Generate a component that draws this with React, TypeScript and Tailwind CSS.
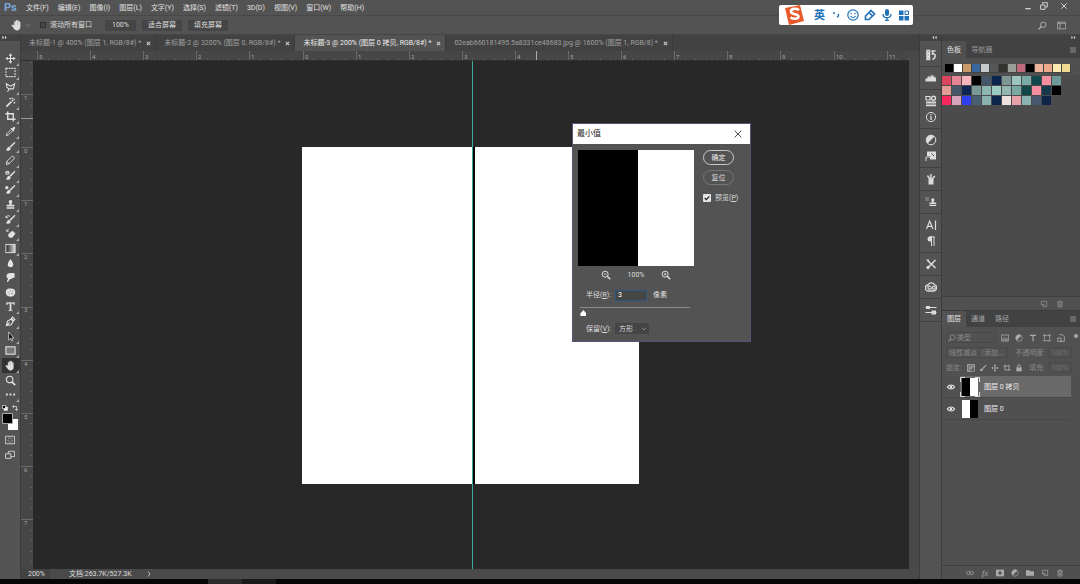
import React, { useState } from 'react';

type IconProps = { children: React.ReactNode; className?: string };

// All glyphs share a 12 x 12 grid
const Glyph: React.FC<IconProps> = ({ children, className = 'size-3' }) => (
  <svg viewBox="0 0 12 12" className={className} fill="none" stroke="currentColor" strokeWidth="1" aria-hidden="true">
    {children}
  </svg>
);

const solid = { fill: 'currentColor', stroke: 'none' };

const brush = (
  <>
    <path d="M10.600.8 5 6l1.200 1.400L11.400 1.800z" {...solid} />
    <path d="M4.600 6.400c-2 0-1.800 2-3.600 3.800 2.200 1 5 .2 5.200-2.100z" {...solid} />
  </>
);

const stamp = <path d="M6 1a2 2 0 0 1 1.400 3.400L7 6.200h3.200v2H1.800v-2H5l-.4-1.800A2 2 0 0 1 6 1zM1.800 9h8.400v1.500H1.800z" {...solid} />;

const hand = (
  <path
    d="M3.400 6.600V3a.6.6 0 0 1 1.200 0v2.500h.3V1.800a.6.6 0 0 1 1.200 0v3.600h.3V2a.6.6 0 0 1 1.200 0v3.700h.3V3.200a.6.6 0 0 1 1.200 0V8c0 2-1.200 3.200-3 3.200-1.900 0-2.600-.8-3.700-2.700L.9 6.700c-.3-.7.5-1.100 1-.6z"
    fill="currentColor"
    strokeWidth=".5"
  />
);

const magnifier = (
  <>
    <circle cx="5" cy="5" r="3.600" strokeWidth="1.200" />
    <path d="m7.500 7.500 3.600 3.600" strokeWidth="1.700" />
  </>
);

const halfCircle = (
  <>
    <circle cx="6" cy="6" r="4.800" />
    <path d="M9.400 2.600A4.800 4.800 0 0 0 2.600 9.400z" {...solid} />
  </>
);

const moveCross = (
  <>
    <path d="M6 2v8M2 6h8" strokeWidth="1.200" />
    <path d="M6 .4 8 3H4zM6 11.600 4 9h4zM.4 6 3 4v4zM11.600 6 9 8V4z" {...solid} />
  </>
);

const newPage = <path d="M2 2h8v8H6L2 6.500zM2 6.500h4V10" />;

const trash = <path d="M2 3h8M4.500 3V1.500h3V3M3 3v7.500h6V3M5 5v4M7 5v4" />;

const tools: { name: string; art: React.ReactNode; more?: boolean }[] = [
  { name: '移动', art: moveCross, more: true },
  { name: '选框', art: <rect x="1" y="1.500" width="10" height="9" strokeDasharray="2 1" strokeWidth="1.200" />, more: true },
  { name: '套索', art: <path d="M1.500 2 6 4.500 10.500 2 9 7.500H4L2 5.500zM4 7.500c1 1.300-.5 2-1.500 3" strokeWidth="1.200" />, more: true },
  {
    name: '魔棒',
    art: <path d="m1.500 10.500 5.500-5.500M7.500 4.500l1.200-1.200M5.500 1v1.500M8 .8v1.500M10.500 2.500 9.500 3M9.500 6l1.500.5" strokeWidth="1.700" />,
    more: true,
  },
  { name: '裁剪', art: <path d="M3 .5V9h8.500M.5 3H9v8.500" strokeWidth="1.500" />, more: true },
  {
    name: '吸管',
    art: (
      <>
        <path d="m7 1.800 1 .8 1-1.300c1.200-1.200 3 .5 1.800 1.800L9.500 4.300l.7 1-.9.9L6 2.800z" {...solid} />
        <path d="M6.500 4 2 8.500 1.500 10.500 3.500 10 8 5.500" />
      </>
    ),
    more: true,
  },
  { name: '画笔', art: brush, more: true },
  { name: '铅笔', art: <path d="m2 7 5.500-5.500c1-.8 3.200 1 2.500 2.500L4.500 9.500 1.500 10.500zM2 7l2.500 2.500" />, more: true },
  { name: '颜色替换', art: <>{brush}<path d="M1 1.500h3v3H1zM5 3H1" /></>, more: true },
  { name: '混合器画笔', art: <>{brush}<circle cx="2" cy="4" r="1.800" {...solid} /></>, more: true },
  { name: '仿制图章', art: stamp, more: true },
  { name: '历史记录画笔', art: <>{brush}<path d="M1.500 4a2.200 2.200 0 0 1 4-1.200M1 2v2h2" /></>, more: true },
  {
    name: '橡皮擦',
    art: (
      <>
        <path d="m5 5.500 3-2.500 3.500 3L8 10.500H5L3 8z" {...solid} />
        <path d="m1 1.500 3 3M4 1 1.500 4.500" />
      </>
    ),
    more: true,
  },
  {
    name: '渐变',
    art: (
      <>
        <defs>
          <linearGradient id="fade">
            <stop offset="0" stopColor="#222" />
            <stop offset="1" stopColor="#ddd" />
          </linearGradient>
        </defs>
        <rect x="1" y="1.500" width="10" height="9" fill="url(#fade)" />
      </>
    ),
    more: true,
  },
  { name: '模糊', art: <path d="M6 1c1.500 2.300 3 4 3 6a3 3 0 0 1-6 0c0-2 1.500-3.700 3-6z" {...solid} /> },
  {
    name: '涂抹',
    art: <path d="M2 3c1-2 7-2 8.500-1.500V6L8 6.500C8 8 5 7 5 8.500L3 11.200 2 10l1.500-3C1.500 7 1.500 5 2 3z" {...solid} />,
  },
  {
    name: '海绵',
    art: (
      <>
        <path d="M.8 5.500C.8 2 3.500 1.500 6 1.500s5.200.7 5.200 4-2 5-5.200 5-5.200-1.500-5.200-5z" {...solid} />
        <path d="M3 5.500h1M5.500 4h1M8 5h1M4.500 7.500h1M7 7h1.500" stroke="#777" />
      </>
    ),
  },
  { name: '文字', art: <path d="M1.500 1.500h9V4h-1l-.5-1.200H6.800v6.900l1.200.3v.7H4V10l1.200-.3V2.800H3L2.500 4h-1z" fill="currentColor" strokeWidth=".3" />, more: true },
  { name: '钢笔', art: <path d="m1.500 10.500 1.200-5L6.500 3.500l2.300 2.300-2 3.700zM1.500 10.500 5 7M7 2.500 9.500 5l1.300-1.300L8.300 1.200z" strokeWidth="1.200" />, more: true },
  { name: '路径选择', art: <path d="M4 1v9l2-2 1.300 3 1.200-.6L7.300 7.700h2.500z" fill="#111" strokeWidth=".8" />, more: true },
  { name: '矩形', art: <rect x="1" y="2" width="10" height="8" fill="#777" strokeWidth="1.200" />, more: true },
  { name: '抓手', art: hand, more: true },
  { name: '缩放', art: magnifier },
  { name: '更多', art: <path d="M1 5h2v2H1zM5 5h2v2H5zM9 5h2v2H9z" {...solid} />, more: true },
];

const sideGroups: { name: string; art: React.ReactNode }[][] = [
  [{ name: '历史记录', art: <path d="M2 1.500h2.500V4H2zM2 5h2.500v2H2zM2 8.500h2.500v2H2zM6.500 2h4M7.500 2v3c3-1 4 3.500 0 5.500" strokeWidth="1.500" /> }],
  [{ name: '直方图', art: <path d="M.5 9.500V7l1-1 1 1V5l1-1 1 2V3l1.200 2L7 2l1 3 1-2 .8 3 1.200-1v4.500z" {...solid} /> }],
  [
    { name: '属性', art: <><path d="M1 1.500h4v3.500H1z" strokeWidth="1.200" /><circle cx="8.500" cy="3.300" r="2" strokeWidth="1.400" /><path d="M1 7.500h10M1 10.300h10" strokeWidth="1.800" /></> },
    { name: '信息', art: <><circle cx="6" cy="6" r="4.600" /><path d="M6 3v1.300M6 5.200V9" strokeWidth="1.400" /></> },
  ],
  [
    { name: '调整', art: halfCircle },
    { name: '样式', art: <><path d="M2 1.500h9V9.500H5V6H2z" {...solid} /><path d="M1 11V7h4" /><path d="M6.500 3.500 9 6" stroke="#4a4a4a" /></> },
  ],
  [{ name: '画笔', art: <><path d="M3.500 6h5v5.500h-5z" {...solid} /><path d="M4.800 6 2.500 2.500M6 6V1M7.300 6l2.500-3" strokeWidth="1.500" /></> }],
  [{ name: '仿制源', art: <><g transform="translate(3 1.500) scale(.8)">{stamp}</g><path d="M.5 2h1M2.500 2h1M.5 4h1M2.500 4h1" strokeWidth="1.200" /></> }],
  [
    { name: '字符', art: <path d="M1.500 10 4.700 2 8 10M2.700 7.300h4M10.500 1.500v9.500" strokeWidth="1.200" /> },
    { name: '段落', art: <><path d="M7 1.500H5a2.500 2.500 0 0 0 0 5h2z" {...solid} /><path d="M6.500 1.500V11M9 1.500V11M4 2h5.500" /></> },
  ],
  [{ name: '工具预设', art: <><path d="m2.500 2.500 8 7.500M10.500 2 3 9.500" strokeWidth="1.500" /><path d="M1 9.500 3 7.500 5 9.500 3 11.500zM1 1.500h3v3z" {...solid} /></> }],
  [{ name: '库', art: <><path d="M.5 7c0-2 1.500-3 2.500-3 1-2.500 5-3 6.300-.5C11 4 11.700 5.500 11.500 7c0 2-1.500 3-3 3h-5c-1.500 0-3-1-3-3z" strokeWidth="1.300" /><path d="M6 6C4.500 4 2.500 5.500 3 7c.5 1.600 2 1.500 3 .5l2-2c1.500-.8 2.500.5 2 1.700S7.500 8.500 7 7.500" strokeWidth="1.200" /></> }],
  [{ name: '调节', art: <><path d="M.5 3.500h11M.5 8.500h11" /><path d="M1 2h4v3H1zM6.500 6.500h4.500v4H6.500z" {...solid} /></> }],
];

const menus = ['文件(F)', '编辑(E)', '图像(I)', '图层(L)', '文字(Y)', '选择(S)', '滤镜(T)', '3D(D)', '视图(V)', '窗口(W)', '帮助(H)'];

const docTabs = [
  '未标题-1 @ 400% (图层 1, RGB/8#) *',
  '未标题-2 @ 3200% (图层 0, RGB/8#) *',
  '未标题-3 @ 200% (图层 0 拷贝, RGB/8#) *',
  '02eab660181495.5a8331ce48683.jpg @ 1600% (图层 1, RGB/8) *',
];

const recentColors = ['#000', '#fff', '#c99b68', '#39679b', '#c5c9cc', '#565656', '#33332f', '#999c98', '#bd697b', '#000', '#f0b49d', '#eea98a', '#fbebb0', '#efd991'];

const swatchRows = [
  ['#d9465e', '#e58495', '#f7b4bf', '#000', '#45566b', '#0c2550', '#7d9894', '#9cc5bf', '#7aaaa5', '#12484c', '#f390a0', '#6c9a98'],
  ['#e39c94', '#48566a', '#0f2553', '#7a9999', '#8eb6b1', '#9bcbc3', '#93b6b0', '#7aa8a3', '#12474a', '#f28e9f', '#17384a', '#000'],
  ['#f5275e', '#d7a5bb', '#2f3ff0', '#48606f', '#8bb1af', '#0d2548', '#efe1df', '#e7a1ab', '#8db2b2', '#45586d', '#0e2548'],
];

const UNIT = 53.1;

const TopRuler = () => (
  <svg className="block h-full w-full" fill="#a5a5a5" stroke="none">
    {Array.from({ length: 90 }, (_, i) => (
      <rect key={i} x={Math.round(16 + (i * UNIT) / 5)} y={i % 5 ? 7 : 0} width="1" height={i % 5 ? 2 : 10} fill={i % 5 ? '#5c5c5c' : '#6a6a6a'} />
    ))}
    {Array.from({ length: 17 }, (_, i) => (
      <text key={i} x={Math.round(18 + i * UNIT)} y="8" fontSize="6">
        {Math.abs(i - 5)}
      </text>
    ))}
    <rect x="515" y="0" width="1" height="10" fill="#aaa" />
  </svg>
);

const SideRuler = () => (
  <svg className="block h-full w-full" fill="#a5a5a5" stroke="none">
    {Array.from({ length: 50 }, (_, i) => (
      <rect key={i} x={i % 5 ? 9 : 0} y={Math.round(-20 + (i * UNIT) / 5)} width={i % 5 ? 2 : 12} height="1" fill={i % 5 ? '#5c5c5c' : '#6a6a6a'} />
    ))}
    {Array.from({ length: 9 }, (_, i) => (
      <text key={i} x="3" y={Math.round(39 + i * UNIT)} fontSize="6">
        {Math.abs(i - 1)}
      </text>
    ))}
    <rect x="0" y="57" width="12" height="1" fill="#999" />
  </svg>
);

const MenuBar = () => (
  <header className="flex h-4 shrink-0 items-center border-b border-[#484848] pl-1">
    <span className="w-[18px] text-[11px] leading-none font-bold text-[#7ba7d8]">Ps</span>
    <nav className="flex gap-[9px] pl-1">
      {menus.map((m) => (
        <button key={m} className="text-[#e2e2e2]">{m}</button>
      ))}
    </nav>
    <div className="ml-auto flex items-center gap-2 pr-3 pb-1 text-[#d0d0d0]">
      <button aria-label="最小化"><Glyph className="size-2"><path d="M2 10h8" strokeWidth="2" /></Glyph></button>
      <button aria-label="还原"><Glyph className="size-2"><path d="M1 4.500h6.500V11H1zM4 4V1h7v6.500H8" strokeWidth="1.500" /></Glyph></button>
      <button aria-label="关闭" className="ml-1"><Glyph className="size-2"><path d="m2 2 8 8M10 2l-8 8" strokeWidth="1.500" /></Glyph></button>
    </div>
  </header>
);

const OptionsBar = () => (
  <div className="flex h-[19px] shrink-0 items-center border-b border-[#464646] pl-[11px] text-[#dedede]">
    <Glyph>{hand}</Glyph>
    <Glyph className="ml-px size-2 text-[#999]"><path d="m3 5 3 3 3-3" /></Glyph>
    <label className="ml-2 flex items-center gap-1">
      <input type="checkbox" className="size-[6px] appearance-none border border-[#303030] bg-[#484848]" />
      滚动所有窗口
    </label>
    <div className="ml-[13px] flex gap-[6px]">
      <button className="h-[11px] rounded-[1px] bg-[#454545] px-[7px]">100%</button>
      <button className="h-[11px] rounded-[1px] bg-[#454545] px-[6px]">适合屏幕</button>
      <button className="h-[11px] rounded-[1px] bg-[#454545] px-[6px]">填充屏幕</button>
    </div>
    <div className="ml-auto flex items-center gap-[10px] pr-[14px] text-[#b5b5b5]">
      <button aria-label="搜索"><Glyph className="size-[9px] -scale-x-100">{magnifier}</Glyph></button>
      <button aria-label="工作区"><Glyph className="size-[9px]"><path d="M.5 1.500h11v9H.5zM4 2v8M1 3h10" /></Glyph></button>
    </div>
  </div>
);

const Toolbar = () => (
  <aside className="w-[21px] shrink-0 border-r border-[#3c3c3c] bg-[#535353] text-[#e2e2e2]">
    <div className="h-[6px] bg-[#424242] pl-[2px]">
      <Glyph className="size-[5px]"><path d="m1 2 4 4-4 4zM7 2l4 4-4 4z" {...solid} /></Glyph>
    </div>
    <div className="mt-[10px] ml-[2px] flex h-[351px] flex-col">
      {tools.map((t) => (
        <button
          key={t.name}
          aria-label={t.name}
          className={`flex flex-1 items-center justify-center ${t.name === '抓手' ? 'bg-[#333]' : ''}`}
        >
          <Glyph className="ml-[2px] size-[11px]">{t.art}</Glyph>
          <Glyph className="size-[3px] self-end text-[#aaa]">{t.more && <path d="M12 0v12H0z" {...solid} />}</Glyph>
        </button>
      ))}
    </div>
    <div className="flex justify-between px-[2px] pt-[3px]">
      <Glyph className="size-[6px]"><path d="M4 4h7v7H4z" fill="#fff" /><path d="M1 1h6v6H1z" fill="#000" strokeWidth="1.500" /></Glyph>
      <Glyph className="size-[6px]"><path d="M2 3h7v8M4 0 1 3l3 3M6 8l3 3 3-3" strokeWidth="1.500" /></Glyph>
    </div>
    <div className="flex justify-center pt-[2px]">
      <svg viewBox="0 0 16 17" className="h-[17px] w-4" role="img" aria-label="前景色和背景色">
        <path d="M6 6h10v11H6z" fill="#fff" />
        <path d="M.5.5h10v10H.5z" fill="#000" stroke="#aaa" />
      </svg>
    </div>
    <div className="flex flex-col items-center gap-[5px] pt-[5px]">
      <button aria-label="快速蒙版"><Glyph className="size-[10px]"><path d="M.5 1.500h11v9H.5z" /><circle cx="6" cy="6" r="2.500" strokeDasharray="1 1" /></Glyph></button>
      <button aria-label="屏幕模式"><Glyph className="size-[10px]"><path d="M4 1.500h7.500V8H4z" /><path d="M.5 4.500H7V10H.5z" fill="#535353" /></Glyph></button>
    </div>
  </aside>
);

const SwatchesPanel = () => (
  <section className="flex flex-col">
    <div className="flex h-[17px] items-stretch bg-[#424242]">
      <button className="w-6 bg-[#4f4f4f] text-[#e4e4e4]">色板</button>
      <button className="w-8 text-[#999]">导航器</button>
      <Glyph className="mt-[6px] mr-1 ml-auto size-[6px] text-[#aaa]"><path d="M0 2h12M0 6h12M0 10h12" strokeWidth="1.500" /></Glyph>
    </div>
    <div className="flex h-[17px] items-center bg-[#505050] pt-[3px] pl-[3px]">
      {recentColors.map((c, i) => (
        <span key={i} className="size-[9px] border-r border-b border-[#444]" style={{ background: c }} />
      ))}
    </div>
    <div className="h-[221px] bg-[#4b4b4b] pt-px">
      {swatchRows.map((row, r) => (
        <div key={r} className="flex">
          {row.map((c, i) => (
            <span key={i} className="size-[10px] border-r border-b border-[#4b4b4b]" style={{ background: c }} />
          ))}
        </div>
      ))}
    </div>
    <div className="flex h-[14px] items-center justify-end gap-2 border-t border-[#404040] bg-[#505050] pr-4 text-[#999]">
      <button aria-label="新建色板"><Glyph className="size-2">{newPage}</Glyph></button>
      <button aria-label="删除色板"><Glyph className="size-2">{trash}</Glyph></button>
    </div>
  </section>
);

interface LayerRowProps {
  name: string;
  active?: boolean;
}

const LayerRow: React.FC<LayerRowProps> = ({ name, active }) => (
  <div className="mr-[9px] flex h-[22px] items-stretch border-b border-[#484848]">
    <button aria-label="显示图层" className="flex w-[18px] items-center justify-center text-[#e6e6e6]">
      <Glyph className="size-2"><path d="M.5 6C3 2 9 2 11.500 6 9 10 3 10 .5 6z" strokeWidth="1.600" /><circle cx="6" cy="6" r="2" {...solid} /></Glyph>
    </button>
    <button className={`flex flex-1 items-center gap-1 text-[#eee] ${active ? 'bg-[#6a6a6a]' : ''}`}>
      <svg viewBox="0 0 20 20" className="size-5">
        <path d="M2 1h8v18H2z" fill={active ? '#000' : '#fff'} />
        <path d="M10 1h8v18h-8z" fill={active ? '#fff' : '#000'} />
        {active && <path d="M.5 5V.5H5M15 .5h4.500V5M19.500 15v4.500H15M5 19.500H.5V15" fill="none" stroke="#ddd" />}
      </svg>
      {name}
    </button>
  </div>
);

const LayersPanel = () => (
  <section className="flex min-h-0 flex-1 flex-col border-t border-[#3c3c3c]">
    <div className="flex h-4 shrink-0 items-stretch bg-[#424242]">
      <button className="w-6 bg-[#535353] text-[#e4e4e4]">图层</button>
      <button className="w-6 text-[#a5a5a5]">通道</button>
      <button className="w-6 text-[#a5a5a5]">路径</button>
      <Glyph className="mt-[5px] mr-1 ml-auto size-[6px] text-[#aaa]"><path d="M0 2h12M0 6h12M0 10h12" strokeWidth="1.500" /></Glyph>
    </div>
    <div className="flex flex-col gap-1 bg-[#515151] pt-[5px] pr-[2px] pb-[3px] pl-1 text-[#8a8a8a]">
      <div className="flex h-[11px] items-center">
        <div className="flex h-[11px] w-[50px] items-center gap-px border border-[#494949] pl-px">
          <Glyph className="size-2 -scale-x-100">{magnifier}</Glyph>
          <select aria-label="筛选" className="w-9 appearance-none"><option>类型</option></select>
        </div>
        <div className="ml-[5px] flex gap-[6px] text-[#ababab]">
          <Glyph className="size-2"><path d="M.5 1.500h11v9H.5zM2 9l3-4 2 2 1-1 2 3z" strokeWidth="1.200" /></Glyph>
          <Glyph className="size-2">{halfCircle}</Glyph>
          <Glyph className="size-2"><path d="M1.500 2h9M6 2v9" strokeWidth="1.800" /></Glyph>
          <Glyph className="size-2"><path d="M2 2h8v8H2zM0 2h4M2 0v4M8 2h4M10 0v4M0 10h4M8 10h4" /></Glyph>
          <Glyph className="size-2"><path d="M4 1h4l3 3v7H5M1 6h5v5H1z" strokeWidth="1.300" /></Glyph>
        </div>
        <span className="mb-1 ml-auto size-1 rounded-full bg-[#aaa]" />
      </div>
      <div className="flex h-[11px] items-center">
        <select aria-label="混合模式" className="h-[11px] w-[62px] appearance-none border border-[#494949] pl-[2px]">
          <option>线性减淡（添加...</option>
        </select>
        <label htmlFor="opacity" className="ml-auto pr-1 whitespace-nowrap">不透明度:</label>
        <input id="opacity" defaultValue="100%" className="mr-[6px] h-[11px] w-[23px] border border-[#494949] pl-px text-[#707070]" />
      </div>
      <div className="flex h-[11px] items-center">
        <span className="whitespace-nowrap">锁定:</span>
        <div className="ml-[5px] flex gap-1 text-[#ababab]">
          <Glyph className="size-2"><path d="M1 1h10v10H1zM1 1h3.500v3.500H1zM7.500 1H11v3.500H7.500zM4.500 4.500h3v3h-3zM1 7.500h3.500V11H1z" strokeWidth="1.200" /></Glyph>
          <Glyph className="size-2">{brush}</Glyph>
          <Glyph className="size-2">{moveCross}</Glyph>
          <Glyph className="size-2"><path d="M.5 3H9v7M3 1v8h8.500M9 1v2" strokeWidth="1.300" /></Glyph>
          <Glyph className="size-2"><path d="M2 5h8v6H2z" {...solid} /><path d="M4 5V3a2 2 0 0 1 4 0v2" strokeWidth="1.300" /></Glyph>
        </div>
        <label htmlFor="fill" className="ml-auto pr-1 whitespace-nowrap">填充:</label>
        <input id="fill" defaultValue="100%" className="mr-[6px] h-[11px] w-[23px] border border-[#494949] pl-px text-[#707070]" />
      </div>
    </div>
    <div className="min-h-0 flex-1 bg-[#505050]">
      <LayerRow name="图层 0 拷贝" active />
      <LayerRow name="图层 0" />
    </div>
    <div className="flex h-[14px] shrink-0 items-center justify-end gap-[7px] border-t border-[#404040] bg-[#505050] pr-4 text-[#aaa]">
      <button aria-label="链接图层"><Glyph className="size-2"><circle cx="3.500" cy="6" r="2.500" /><circle cx="8.500" cy="6" r="2.500" /></Glyph></button>
      <button className="w-2 font-['Liberation_Serif',serif] text-[9px] italic">fx</button>
      <button aria-label="添加蒙版"><Glyph className="size-2"><path d="M0 1h12v10H0z" {...solid} /><circle cx="6" cy="6" r="2.500" fill="#505050" stroke="none" /></Glyph></button>
      <button aria-label="调整图层"><Glyph className="size-2">{halfCircle}</Glyph></button>
      <button aria-label="新建组"><Glyph className="size-2"><path d="M0 2h5l1 1.500h6V10H0z" {...solid} /></Glyph></button>
      <button aria-label="新建图层"><Glyph className="size-2">{newPage}</Glyph></button>
      <button aria-label="删除图层"><Glyph className="size-2">{trash}</Glyph></button>
    </div>
  </section>
);

const ImeBar = () => (
  <div className="absolute top-[5px] right-[167px] flex h-5 w-[134px] items-center gap-[5px] rounded-[2px] bg-white pl-1 text-[#2272b6]">
    <svg viewBox="0 0 22 22" className="size-[22px]">
      <path d="M2 4 17 1l4 16L6 21z" fill="#e8592b" />
      <path d="M16 6c-3-2-8-1.500-8 1.500 0 3.500 7.500 2 7.500 5 0 2.500-5 3-8 1" fill="none" stroke="#fff" strokeWidth="2.600" />
    </svg>
    <span className="ml-1 text-[11px] leading-none font-bold">英</span>
    <Glyph><circle cx="4" cy="4" r="1" {...solid} /><path d="M8 5c1 1 .5 2.500-1 3" strokeWidth="1.500" /></Glyph>
    <Glyph><circle cx="6" cy="6" r="5.200" strokeWidth="1.200" /><path d="M3.500 7c1 2 4 2 5 0M4 3.800v1.400M8 3.800v1.400" strokeWidth="1.200" /></Glyph>
    <Glyph><path d="M1.500 10.500V7L7 1.500 10.500 5 5 10.500zM5 3.500 8.500 7" strokeWidth="1.700" /></Glyph>
    <Glyph><rect x="4" y="0" width="4" height="7" rx="2" {...solid} /><path d="M2 5c0 5 8 5 8 0M6 9v3M4 11.500h4" strokeWidth="1.300" /></Glyph>
    <Glyph><path d="M1 1.500h4.500V6H1zM1 7h4.500v4.500H1zM6.500 7H11v4.500H6.500z" {...solid} /><path d="M7 2h3.500v3.500H7z" /></Glyph>
  </div>
);

const MinimumDialog = () => {
  const [radius, setRadius] = useState('3');

  return (
    <div role="dialog" aria-label="最小值" className="absolute top-[62px] left-[539px] w-[179px] border border-[#55557c] bg-[#535353] pb-[6px] text-[#dedede]">
      <div className="flex h-5 items-center justify-between bg-white px-1 text-[#222]">
        <h2 className="text-[8px]">最小值</h2>
        <button aria-label="关闭" className="pr-1"><Glyph className="size-2"><path d="m1 1 10 10M11 1 1 11" strokeWidth="1.200" /></Glyph></button>
      </div>
      <div className="flex gap-[9px] pt-[6px] pl-[5px]">
        <svg viewBox="0 0 116 116" className="size-[116px] bg-white" role="img" aria-label="预览图">
          <path d="M0 0h60v116H0z" fill="#000" />
        </svg>
        <div className="flex flex-col items-start gap-[5px]">
          <button className="h-[15px] w-[31px] rounded-full border border-[#c8c8c8] text-[#eee]">确定</button>
          <button className="h-[15px] w-[31px] rounded-full border border-[#777]">复位</button>
          <label className="mt-[3px] flex items-center gap-1 whitespace-nowrap">
            <span className="relative flex size-2">
              <input type="checkbox" defaultChecked className="size-2 appearance-none rounded-[1px] bg-[#e4e4e4]" />
              <Glyph className="pointer-events-none absolute inset-0 size-2 text-[#222]"><path d="m2.500 6 2.500 2.500 4.500-5" strokeWidth="1.800" /></Glyph>
            </span>
            <span>预览(<u>P</u>)</span>
          </label>
        </div>
      </div>
      <div className="flex h-[18px] w-[126px] items-center justify-center gap-[14px]">
        <button aria-label="缩小"><Glyph className="size-[10px]">{magnifier}<path d="M3.500 5h3" /></Glyph></button>
        <span className="w-[22px] text-center">100%</span>
        <button aria-label="放大"><Glyph className="size-[10px]">{magnifier}<path d="M3.500 5h3M5 3.500v3" /></Glyph></button>
      </div>
      <div className="flex h-[22px] items-center pl-[13px]">
        <label htmlFor="radius" className="w-[29px] whitespace-nowrap">半径(<u>R</u>):</label>
        <input
          id="radius"
          value={radius}
          onChange={(e) => setRadius(e.target.value)}
          className="h-[11px] w-8 border border-[#2b5583] bg-[#454545] pl-[2px] text-white"
        />
        <span className="pl-[6px]">像素</span>
      </div>
      <input
        type="range"
        aria-label="半径"
        min="1"
        max="500"
        value={Number(radius) || 1}
        onChange={(e) => setRadius(e.target.value)}
        className="ml-[7px] block h-[10px] w-[110px] appearance-none bg-[linear-gradient(#8a8a8a,#8a8a8a)] bg-[length:100%_1px] bg-[position:0_1px] bg-no-repeat [&::-webkit-slider-thumb]:mt-[4px] [&::-webkit-slider-thumb]:h-[6px] [&::-webkit-slider-thumb]:w-[6px] [&::-webkit-slider-thumb]:appearance-none [&::-webkit-slider-thumb]:bg-white [&::-webkit-slider-thumb]:[clip-path:polygon(50%_0,100%_60%,100%_100%,0_100%,0_60%)]"
      />
      <div className="mt-[6px] flex h-[13px] items-center pl-[13px]">
        <label htmlFor="keep" className="w-[29px] whitespace-nowrap">保留(<u>V</u>):</label>
        <div className="relative">
          <select id="keep" className="block h-[11px] w-[34px] appearance-none bg-[#454545] pl-1">
            <option>方形</option>
          </select>
          <Glyph className="pointer-events-none absolute top-[3px] right-[2px] size-[6px] text-[#999]"><path d="m2 4 4 4 4-4" strokeWidth="1.500" /></Glyph>
        </div>
      </div>
    </div>
  );
};

export default function App() {
  return (
    <div className="relative flex h-screen flex-col overflow-hidden bg-[#535353] font-['Roboto','Noto_Sans_CJK_SC',sans-serif] text-[7px] leading-[10px] select-none">
      <MenuBar />
      <OptionsBar />
      <ImeBar />

      <div className="flex min-h-0 flex-1">
        <Toolbar />

        <main className="flex min-w-0 flex-1 flex-col bg-[#484848]">
          <div className="flex h-4 shrink-0 items-stretch bg-[#424242]">
            {docTabs.map((t, i) => (
              <button
                key={t}
                className={`flex items-center gap-[5px] border-r border-[#3a3a3a] pr-1 pl-2 whitespace-nowrap ${i === 2 ? 'bg-[#535353] text-[#eee]' : 'text-[#a0a0a0]'}`}
              >
                {t}
                <Glyph className="size-[5px] text-[#ccc]"><path d="m2 2 8 8M10 2l-8 8" strokeWidth="2.500" /></Glyph>
              </button>
            ))}
          </div>
          <div className="mr-[10px] h-[10px] shrink-0 border-b border-[#303030] bg-[#464646]">
            <TopRuler />
          </div>
          <div className="flex min-h-0 flex-1">
            <div className="w-3 shrink-0 bg-[#464646]">
              <SideRuler />
            </div>
            <div className="relative mr-[10px] flex-1 bg-[#282828]">
              <div className="absolute top-[86px] left-[269px] h-[337px] w-[337px] bg-white" />
              <div className="absolute top-[86px] left-[440px] h-[337px] w-[2px] bg-black" />
              <div className="absolute inset-y-0 left-[439px] w-px bg-[#3fa59e]" />
              <MinimumDialog />
            </div>
          </div>
          <div className="flex h-[10px] shrink-0 items-center bg-[#4a4a4a] text-[#dedede]">
            <span className="w-[29px] bg-[#424242] pl-[7px]">200%</span>
            <span className="w-[76px] pl-[19px] whitespace-nowrap">文档:263.7K/527.3K</span>
            <Glyph className="ml-5 size-[6px]"><path d="m4 1 4 5-4 5" strokeWidth="1.500" /></Glyph>
          </div>
        </main>

        <aside className="flex w-[23px] shrink-0 flex-col border-x border-[#3c3c3c] bg-[#535353] text-[#dcdcdc]">
          <div className="mb-[3px] flex h-[6px] justify-end bg-[#424242] pr-1">
            <Glyph className="size-[5px]"><path d="m5 2-4 4 4 4zM11 2 7 6l4 4z" {...solid} /></Glyph>
          </div>
          {sideGroups.map((group, i) => (
            <div key={i} className="flex flex-col items-center gap-1 border-b border-[#404040] py-[5px]">
              {group.map((s) => (
                <button key={s.name} aria-label={s.name}><Glyph>{s.art}</Glyph></button>
              ))}
            </div>
          ))}
        </aside>

        <aside className="flex w-[138px] shrink-0 flex-col">
          <div className="flex h-[6px] shrink-0 justify-end bg-[#424242] pr-1 text-[#ccc]">
            <Glyph className="size-[5px]"><path d="m1 2 4 4-4 4zM7 2l4 4-4 4z" {...solid} /></Glyph>
          </div>
          <SwatchesPanel />
          <LayersPanel />
        </aside>
      </div>

      <footer className="flex h-[5px] shrink-0 bg-[#060606] pl-[208px]">
        <span className="w-[34px] bg-[#2c2c2c]" />
        <span className="w-[34px] bg-[#1a1a1a]" />
      </footer>
    </div>
  );
}
